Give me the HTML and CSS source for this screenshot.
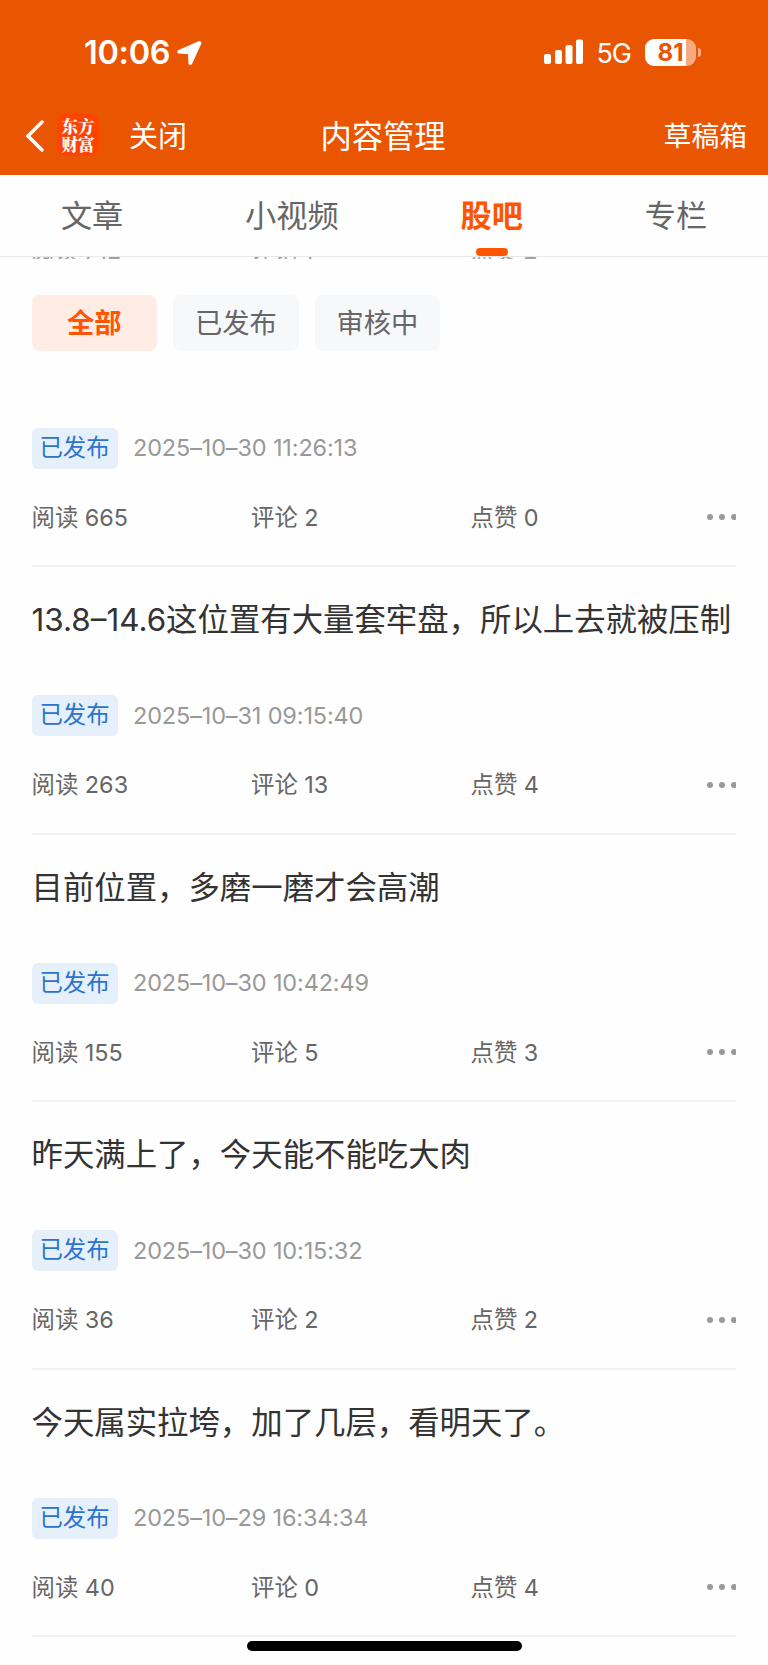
FILE: index.html
```html
<!DOCTYPE html>
<html lang="zh-CN">
<head>
    <meta charset="UTF-8">
    <meta name="viewport" content="width=device-width, initial-scale=1.0">
    <title>内容管理</title>
    <link rel="stylesheet" href="styles.css">
</head>
<body>
    <div class="page">
        <header class="header">
            <div class="status-bar">
                <div class="status-left">
                    <span class="time">10:06</span>
                    <svg class="location" width="26" height="26" viewBox="0 0 26 26">
                        <path d="M23.500 2 2.500 11.200 2.500 12.500 13 13.200 13.500 23.800 15 23.800 24.500 3z" fill="#fff" stroke="#fff" stroke-width="2" stroke-linejoin="round"/>
                    </svg>
                </div>
                <div class="status-right">
                    <svg class="signal" width="40" height="26" viewBox="0 0 40 26" fill="#fff">
                        <rect x="0" y="15" width="7" height="10" rx="2"/>
                        <rect x="11" y="11" width="7" height="14" rx="2"/>
                        <rect x="21.500" y="6" width="7" height="19" rx="2"/>
                        <rect x="32" y="0.500" width="7" height="24.500" rx="2"/>
                    </svg>
                    <span class="network">5G</span>
                    <div class="battery"><span>81</span></div>
                    <div class="battery-cap"></div>
                </div>
            </div>
            <nav class="nav-bar">
                <div class="nav-left">
                    <svg class="back" width="20" height="32" viewBox="0 0 20 32">
                        <path d="M17 2 3 16l14 14" fill="none" stroke="#fff" stroke-width="3.500" stroke-linecap="round"/>
                    </svg>
                    <div class="logo"><span>东方</span><span>财富</span></div>
                    <span class="close">关闭</span>
                </div>
                <h1>内容管理</h1>
                <span class="draft">草稿箱</span>
            </nav>
        </header>

        <div class="tabs">
            <div class="tab">文章</div>
            <div class="tab">小视频</div>
            <div class="tab active">股吧</div>
            <div class="tab">专栏</div>
        </div>

        <!-- 滚动到标签栏下面的上一条 -->
        <div class="hidden-row">
            <div class="stats">
                <span>阅读 712</span><span>评论 1</span><span>点赞 2</span>
            </div>
        </div>

        <div class="filters">
            <div class="filter active">全部</div>
            <div class="filter">已发布</div>
            <div class="filter">审核中</div>
        </div>

        <main class="list">
            <article class="item">
                <div class="meta"><span class="badge">已发布</span><time>2025–10–30 11:26:13</time></div>
                <div class="stats">
                    <span>阅读 665</span><span>评论 2</span><span>点赞 0</span>
                    <div class="more"><i></i><i></i><i></i></div>
                </div>
            </article>
            <article class="item">
                <h2>13.8–14.6这位置有大量套牢盘，所以上去就被压制</h2>
                <div class="meta"><span class="badge">已发布</span><time>2025–10–31 09:15:40</time></div>
                <div class="stats">
                    <span>阅读 263</span><span>评论 13</span><span>点赞 4</span>
                    <div class="more"><i></i><i></i><i></i></div>
                </div>
            </article>
            <article class="item">
                <h2>目前位置，多磨一磨才会高潮</h2>
                <div class="meta"><span class="badge">已发布</span><time>2025–10–30 10:42:49</time></div>
                <div class="stats">
                    <span>阅读 155</span><span>评论 5</span><span>点赞 3</span>
                    <div class="more"><i></i><i></i><i></i></div>
                </div>
            </article>
            <article class="item">
                <h2>昨天满上了，今天能不能吃大肉</h2>
                <div class="meta"><span class="badge">已发布</span><time>2025–10–30 10:15:32</time></div>
                <div class="stats">
                    <span>阅读 36</span><span>评论 2</span><span>点赞 2</span>
                    <div class="more"><i></i><i></i><i></i></div>
                </div>
            </article>
            <article class="item">
                <h2>今天属实拉垮，加了几层，看明天了。</h2>
                <div class="meta"><span class="badge">已发布</span><time>2025–10–29 16:34:34</time></div>
                <div class="stats">
                    <span>阅读 40</span><span>评论 0</span><span>点赞 4</span>
                    <div class="more"><i></i><i></i><i></i></div>
                </div>
            </article>
        </main>
        <div class="home-indicator"></div>
    </div>
</body>
</html>
```
FILE: styles.css
```css
* {
    box-sizing: border-box;
}

body {
    margin: 0;
    background: #fefefe;
    font-family: Inter, "Noto Sans CJK SC", sans-serif;
    color: #333;
}

.page {
    height: 1665px;
    position: relative;
    overflow: hidden;
}

.header {
    height: 174.5px;
    background: #ea5502;
    color: #fff;
}

.status-bar {
    height: 100px;
    padding: 5px 67px 0 84px;
    display: flex;
    justify-content: space-between;
    align-items: center;
}

.status-left, .status-right {
    display: flex;
    align-items: center;
}

.time {
    font-size: 32.5px;
    font-weight: 600;
    letter-spacing: -0.3px;
}

.location {
    margin-left: 6px;
}

.signal {
    margin-top: -2px;
}

.network {
    margin-left: 12px;
    font-size: 27px;
    letter-spacing: -1px;
    line-height: 32px;
    padding-top: 2px;
}

.battery {
    width: 51px;
    height: 27px;
    margin: -1px 0 0 14px;
    border-radius: 9px;
    background: linear-gradient(to right, #fff 81%, #f5aa81 81%);
    color: #ea5502;
    font-size: 24px;
    font-weight: 700;
    line-height: 27px;
    text-align: center;
}

.battery-cap {
    width: 3px;
    height: 9px;
    margin-left: 2px;
    border-radius: 0 4px 4px 0;
    background: #f5aa81;
}

.nav-bar {
    height: 72px;
    padding: 0 21px 0 25px;
    display: grid;
    grid-template-columns: 1fr auto 1fr;
    align-items: center;
}

.nav-left {
    display: flex;
    align-items: center;
}

.logo {
    width: 42px;
    height: 42px;
    margin: -2px 0 0 12px;
    border-radius: 9px;
    background: #ff4400;
    display: flex;
    flex-direction: column;
    align-items: center;
    justify-content: center;
    font-family: "Noto Serif CJK SC", "Noto Sans CJK SC", serif;
    font-size: 16.5px;
    font-weight: 900;
    line-height: 18px;
}

.close {
    margin: -4px 0 0 30px;
    font-size: 29px;
}

.nav-bar h1 {
    margin: -4px 6px 0 0;
    font-size: 31.3px;
    font-weight: 400;
}

.draft {
    justify-self: end;
    margin-top: -4px;
    font-size: 27.8px;
}

.tabs {
    height: 82.5px;
    border-bottom: 1.5px solid #e8e8e8;
    display: flex;
    justify-content: space-around;
}

.tab {
    position: relative;
    font-size: 31.2px;
    line-height: 82px;
    color: #666;
}

.tab.active {
    color: #ff5500;
    font-weight: 700;
}

.tab.active::after {
    content: '';
    position: absolute;
    left: 50%;
    bottom: 0;
    width: 32px;
    height: 8.5px;
    margin-left: -16px;
    border-radius: 4px;
    background: #ff5500;
}

.hidden-row {
    height: 2px;
    margin: 0 31px;
    overflow: hidden;
    display: flex;
    align-items: flex-end;
    opacity: 0.6;
}

.hidden-row .stats {
    flex: 1;
    margin-bottom: -8px;
}

.filters {
    padding: 36px 31.5px 0;
    display: flex;
    gap: 16px;
}

.filter {
    width: 125.6px;
    height: 56px;
    border-radius: 8px;
    background: #f7f8fa;
    color: #666;
    font-size: 27.3px;
    line-height: 57px;
    text-align: center;
}

.filter.active {
    background: #ffece5;
    color: #ff5500;
    font-weight: 700;
}

.list {
    padding: 47.5px 32px 0 31.5px;
}

.item {
    height: 267.6px;
    padding-top: 29px;
    border-bottom: 2px solid #f0f0f0;
}

.item:first-child {
    height: 168.600px;
}

.item h2 {
    margin: 0 0 52px;
    height: 47px;
    font-size: 31.4px;
    font-weight: 400;
    line-height: 49px;
    white-space: nowrap;
}

.meta {
    display: flex;
    align-items: center;
    height: 41px;
}

.badge {
    width: 86px;
    height: 41px;
    border-radius: 6px;
    background: #e6f0fb;
    color: #2b73cc;
    font-size: 23.4px;
    line-height: 40px;
    text-align: center;
}

.meta time {
    margin: -1px 0 0 15.5px;
    color: #999;
    font-size: 23.5px;
    letter-spacing: -0.15px;
}

.stats {
    display: flex;
    align-items: center;
    height: 33px;
    margin-top: 32px;
    color: #666;
    font-size: 23.4px;
    line-height: 33px;
}

.stats span {
    width: 219.5px;
}

/* 第三个点被右边缘裁掉一点 */
.more {
    width: 29px;
    margin-left: auto;
    overflow: hidden;
    display: flex;
    gap: 6px;
}

.stats span:nth-child(3) {
    width: auto;
}

.more i {
    flex: none;
    width: 6px;
    height: 6px;
    border-radius: 50%;
    background: #999;
}

.home-indicator {
    position: absolute;
    left: 246.5px;
    bottom: 14px;
    width: 275px;
    height: 10px;
    border-radius: 5px;
    background: #000;
}
```
